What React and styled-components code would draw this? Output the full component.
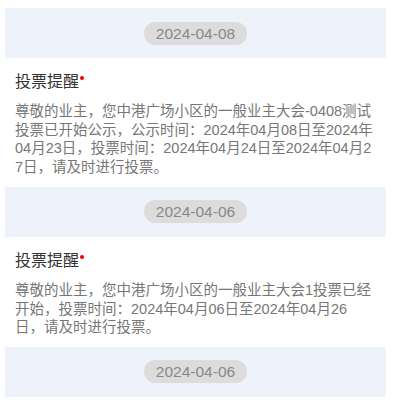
import React from "react";
import styled, { createGlobalStyle } from "styled-components";

const Global = createGlobalStyle`
  html, body { margin: 0; padding: 0; background: #fff; }
  body { font-family: "Liberation Sans", "Noto Sans CJK SC", sans-serif; }
`;

const Page = styled.div`
  padding: 8px 0 0 5px;
  width: 381px;
`;

const DateBand = styled.div`
  height: 50px;
  background: #eef2fb;
  display: flex;
  align-items: center;
  justify-content: center;
`;

const DatePill = styled.span`
  height: 23px;
  padding: 0 12px;
  border-radius: 12px;
  background: #dcdcdc;
  color: #888;
  font-size: 15.5px;
  line-height: 23px;
`;

const Card = styled.div`
  padding: 10px 10px 10px;
  background: #fff;
`;

const Title = styled.div`
  display: flex;
  align-items: center;
  height: 24px;
  font-size: 16px;
  color: #333;
  font-family: "Noto Sans CJK SC", sans-serif;
`;

const Dot = styled.span`
  width: 4px;
  height: 4px;
  border-radius: 50%;
  background: #f20000;
  margin: -4px 0 0 1px;
`;

const Body = styled.p`
  margin: 10px 0 0;
  font-size: 14.5px;
  line-height: 18.7px;
  color: #777;
  word-break: break-all;
`;

const items = [
  {
    date: "2024-04-08",
    text: "尊敬的业主，您中港广场小区的一般业主大会-0408测试投票已开始公示，公示时间：2024年04月08日至2024年04月23日，投票时间：2024年04月24日至2024年04月27日，请及时进行投票。",
  },
  {
    date: "2024-04-06",
    text: "尊敬的业主，您中港广场小区的一般业主大会1投票已经开始，投票时间：2024年04月06日至2024年04月26日，请及时进行投票。",
  },
  {
    date: "2024-04-06",
    text: "尊敬的业主，您中港广场小区的一般业主大会投票已经开始，请及时进行投票。",
  },
];

export default function App() {
  return (
    <>
      <Global />
      <Page>
        {items.map((it, i) => (
          <section key={i}>
            <DateBand>
              <DatePill>{it.date}</DatePill>
            </DateBand>
            <Card>
              <Title>
                投票提醒
                <Dot />
              </Title>
              <Body>{it.text}</Body>
            </Card>
          </section>
        ))}
      </Page>
    </>
  );
}
